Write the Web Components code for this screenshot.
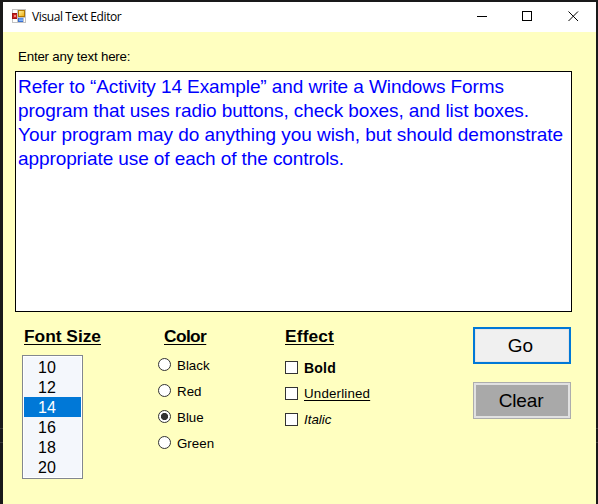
<!DOCTYPE html>
<html lang="en">
<head>
<meta charset="utf-8">
<title>Visual Text Editor</title>
<style>
html,body{margin:0;height:100%;overflow:hidden;background:#19191a}
</style>
</head>
<body>
<editor-window></editor-window>
<script>
const define = (name, html) => customElements.define(name, class extends HTMLElement {
  constructor() {
    super();
    const t = document.createElement('template');
    t.innerHTML = html;
    this.attachShadow({mode: 'open'}).append(t.content.cloneNode(true));
  }
});

define('app-icon', `<style>:host{display:block;width:14px;height:14px}svg{display:block}</style>
<svg width="14" height="14" viewBox="0 0 14 14" shape-rendering="crispEdges">
<defs><linearGradient id="y" x2="1" y2="1"><stop stop-color="#fff0a0"/><stop offset="1" stop-color="#f0b010"/></linearGradient>
<linearGradient id="b" x2="0" y2="1"><stop stop-color="#4a86e8"/><stop offset="1" stop-color="#8ab8fa"/></linearGradient></defs>
<rect width="14" height="14" fill="#c2c2c2"/><path d="M1 1h4v3H1zM1 10h4v3H1zM12 9h1v4h-1z" fill="#fff"/>
<rect y="4" width="5" height="6" fill="#9c1414"/><rect x="1" y="5" width="4" height="4" fill="#c82020"/><rect x="2" y="6" width="2" height="2" fill="#f08a78"/>
<rect x="6" y="1" width="7" height="7" fill="#b27800"/><rect x="7" y="2" width="5" height="5" fill="url(#y)"/>
<rect x="6" y="9" width="5" height="4" fill="#3a70d0"/><rect x="7" y="9" width="4" height="3" fill="url(#b)"/>
</svg>`);

define('title-bar', `<style>
:host{display:flex;height:30px;background:#fff;color:#000;padding-left:9px;align-items:center;box-sizing:border-box}
app-icon{flex:none;margin-right:6px;margin-bottom:2px}
span{flex:1;font:12px/16px "Open Sans","Noto Sans",sans-serif;letter-spacing:-.4px;white-space:nowrap}
svg{display:block;flex:none}
</style><app-icon></app-icon><span><slot></slot></span>
<svg width="137" height="30" viewBox="0 0 137 30" fill="none" stroke="#000">
<path d="M18 14.5h10M63.500 9.500h9v9h-9z" shape-rendering="crispEdges"/><path d="M109.500 9.500l9.500 9.500M119 9.500l-9.500 9.500"/></svg>`);

define('text-area', `<style>
:host{display:block;box-sizing:border-box;width:557px;height:241px;border:1px solid #000;background:#fff;color:#00f;padding:3px 2px;font-size:19px;line-height:24px;letter-spacing:-.09px;white-space:nowrap}
</style><slot></slot>`);

define('text-line', `<style>:host{display:block}:host([wide]){letter-spacing:-.04px}</style><slot></slot>`);

define('group-title', `<style>
:host{display:block;height:20px;font-size:17.330px;line-height:20px;font-weight:bold;white-space:nowrap}
span{text-decoration:underline;text-decoration-thickness:1px;text-underline-offset:2px;text-decoration-skip-ink:none}
</style><span><slot></slot></span>`);

define('list-box', `<style>
:host{display:block;box-sizing:border-box;width:61px;height:124px;border:1px solid #828790;background:#f4f7fc;padding:1px;box-shadow:inset 0 0 0 1px #fff}
</style><slot></slot>`);

define('list-item', `<style>
:host{display:block;height:20px;line-height:21px;font-size:16px;padding-left:14px}
:host([selected]){background:#0078d7;color:#fff}
</style><slot></slot>`);

define('radio-option', `<style>
:host{display:flex;align-items:center;height:26px;gap:6px;white-space:nowrap}
i{box-sizing:border-box;width:13px;height:13px;border:1px solid #333;border-radius:50%;background:#fff}
:host([checked]) i{background:radial-gradient(circle,#333 3.300px,#fff 3.900px)}
span{padding-top:3px}
</style><i></i><span><slot></slot></span>`);

define('check-option', `<style>
:host{display:flex;align-items:center;height:26px;gap:6px;white-space:nowrap}
i{box-sizing:border-box;width:13px;height:13px;border:1px solid #333;background:#fff}
span{padding-top:2px;text-underline-offset:2px;text-decoration-thickness:1px;text-decoration-skip-ink:none}
:host([underlined]) span{text-decoration-line:underline;letter-spacing:.17px}
:host([bold]) span{font-weight:bold;font-size:14px;letter-spacing:.2px}
:host([italic]) span{font-style:italic}
</style><i></i><span><slot></slot></span>`);

define('push-button', `<style>
:host{display:flex;box-sizing:border-box;width:98px;height:37px;align-items:center;justify-content:center;font-size:19px;line-height:22px}
:host([primary]){border:2px solid #0078d7;background:#f0f0f0;box-shadow:inset 0 0 0 1px #e5e5e5;padding-right:3px}
:host([muted]){border:1px solid #adadad;background:#a9a9a9;box-shadow:inset 0 0 0 2px #e1e1e1;padding-right:2px;letter-spacing:-.15px}
</style><slot></slot>`);

define('editor-window', `<style>
:host{display:block;box-sizing:border-box;height:504px;padding:2px 2px 0 3px;font:13.330px/16px "Liberation Sans",Arial,sans-serif;color:#000;
background:linear-gradient(#393939,#393939) 0 428px/100% 1px no-repeat,linear-gradient(#393939,#393939) 0 442px/100% 1px no-repeat,#19191a}
main{height:472px;background:#ffffc0;box-sizing:border-box;padding:17px 0 0 12px}
label{display:block;height:22px;padding-left:3px;letter-spacing:-.2px}
.controls{display:grid;grid-template-columns:136px 127px 195px 98px;padding-top:14px}
.fonts{padding-left:7px}.fonts list-box{margin-top:9px}.fonts group-title{padding-left:2px}
.colors{padding-left:7px}.colors group-title{padding-left:6px;margin-bottom:5px;letter-spacing:-.6px}
.effects{padding-left:7px}.effects group-title{margin-bottom:8px;letter-spacing:.15px}
.buttons{display:flex;flex-direction:column;gap:18px;padding-top:1px}
</style>
<title-bar>Visual Text Editor</title-bar>
<main>
<label>Enter any text here:</label>
<text-area><text-line>Refer to “Activity 14 Example” and write a Windows Forms</text-line><text-line>program that uses radio buttons, check boxes, and list boxes.</text-line><text-line wide>Your program may do anything you wish, but should demonstrate</text-line><text-line>appropriate use of each of the controls.</text-line></text-area>
<div class="controls">
<section class="fonts"><group-title>Font Size</group-title><list-box><list-item>10</list-item><list-item>12</list-item><list-item selected>14</list-item><list-item>16</list-item><list-item>18</list-item><list-item>20</list-item></list-box></section>
<section class="colors"><group-title>Color</group-title><radio-option>Black</radio-option><radio-option>Red</radio-option><radio-option checked>Blue</radio-option><radio-option>Green</radio-option></section>
<section class="effects"><group-title>Effect</group-title><check-option bold>Bold</check-option><check-option underlined>Underlined</check-option><check-option italic>Italic</check-option></section>
<section class="buttons"><push-button primary>Go</push-button><push-button muted>Clear</push-button></section>
</div>
</main>`);
</script>
</body>
</html>
